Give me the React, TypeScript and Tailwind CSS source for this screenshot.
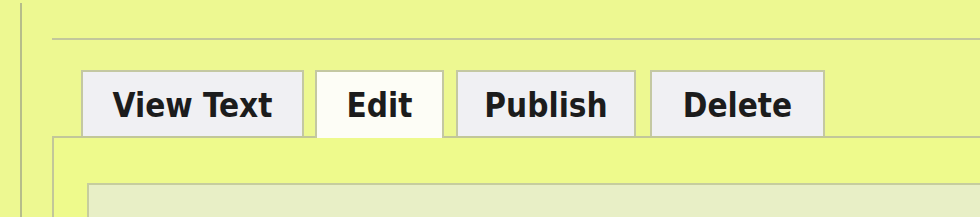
const tabs = [
  { label: "View Text", width: "w-[223px]", active: false },
  { label: "Edit", width: "w-[129px]", active: true },
  { label: "Publish", width: "w-[180px]", active: false },
  { label: "Delete", width: "w-[175px]", active: false },
];

export default function App() {
  return (
    <div className="flex h-[217px] w-[980px] overflow-hidden bg-[#edf891] font-['DejaVu_Sans_Condensed','DejaVu_Sans',sans-serif]">
      {/* left frame edge */}
      <div className="mt-[3px] ml-5 w-[2px] bg-[#b6bd8a]" />

      <div className="ml-[30px] flex flex-1 flex-col pt-[38px]">
        <div className="h-[2px] shrink-0 bg-[#c2c79b]" />

        <div className="mt-[30px] flex shrink-0 pl-[29px]">
          {tabs.map((tab, i) => (
            <div
              key={tab.label}
              className={`${tab.width} ${i === 1 ? "ml-[11px]" : i === 2 ? "ml-[12px]" : i === 3 ? "ml-[14px]" : ""} relative z-10 flex h-[66px] justify-center border-x-2 border-t-2 border-[#c4c8a2] pt-[17px] text-[33px] font-bold leading-none text-[#1c1c1c] ${
                tab.active ? "-mb-[2px] h-[68px] bg-[#fdfdf6]" : "bg-[#f0f0f3]"
              }`}
            >
              {tab.label}
            </div>
          ))}
        </div>

        <div className="min-h-0 flex-1 shrink-0 border-t-2 border-l-2 border-[#c2c799] bg-[#eefa8c] pt-[45px] pl-[33px]">
          <div className="h-[60px] border-t-2 border-l-2 border-[#c6cd9e] bg-[#e8efc6]" />
        </div>
      </div>
    </div>
  );
}
